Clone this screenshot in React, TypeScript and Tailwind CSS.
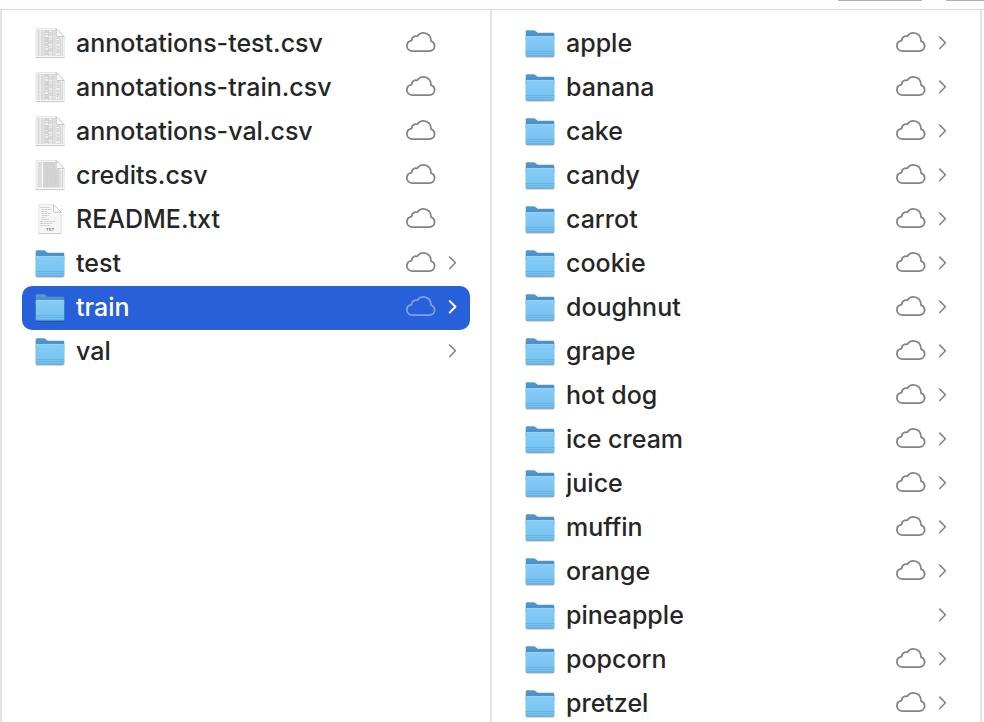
import { useId } from "react";

type Kind = "sheet" | "dense" | "text" | "folder";

interface Entry {
  name: string;
  kind: Kind;
  cloud?: boolean;
}

const files: Entry[] = [
  { name: "annotations-test.csv", kind: "sheet", cloud: true },
  { name: "annotations-train.csv", kind: "sheet", cloud: true },
  { name: "annotations-val.csv", kind: "sheet", cloud: true },
  { name: "credits.csv", kind: "dense", cloud: true },
  { name: "README.txt", kind: "text", cloud: true },
  { name: "test", kind: "folder", cloud: true },
  { name: "train", kind: "folder", cloud: true },
  { name: "val", kind: "folder" },
];

const classes: Entry[] = [
  "apple", "banana", "cake", "candy", "carrot", "cookie", "doughnut", "grape",
  "hot dog", "ice cream", "juice", "muffin", "orange", "pineapple", "popcorn", "pretzel",
].map((name) => ({ name, kind: "folder", cloud: name !== "pineapple" }));

function FolderIcon() {
  const id = useId();
  return (
    <svg viewBox="0 0 30 32" className="h-8 w-[30px] shrink-0" aria-hidden="true">
      <defs>
        <linearGradient id={id + "f"} x1="0" y1="0" x2="0" y2="1">
          <stop offset="0" stopColor="#86cdf7" />
          <stop offset="1" stopColor="#74bff0" />
        </linearGradient>
        <linearGradient id={id + "b"} x1="0" y1="0" x2="0" y2="1">
          <stop offset="0" stopColor="#559bce" />
          <stop offset="1" stopColor="#3b84bd" />
        </linearGradient>
      </defs>
      <rect x=".5" y="9" width="29" height="21" rx="1.8" fill="#000" opacity=".1" />
      <rect x=".8" y="9" width="28.4" height="20.2" rx="1.6" fill="#000" opacity=".24" />
      <path d="M.7 3.6Q.7 2.2 2.1 2.2H8.2C9.4 2.2 10 2.5 10.9 3.3L12 4.2Q12.7 4.8 14 4.8H27.9Q29.3 4.8 29.3 6.2V12H.7Z" fill={"url(#" + id + "b)"} />
      <path d="M.7 9.2Q.7 8 1.9 8H28.1Q29.3 8 29.3 9.2V27.2Q29.3 28.4 28.1 28.4H1.9Q.7 28.4 .7 27.2Z" fill={"url(#" + id + "f)"} />
      <path d="M1.8 8.4H28.2" stroke="#9ad7fa" strokeWidth=".7" />
      <path d="M.7 23.5H29.3M.7 25.5H29.3" stroke="#5caddf" strokeWidth=".6" />
      <path d="M1.4 28H28.6" stroke="#529fcf" strokeWidth=".7" />
    </svg>
  );
}

function SheetIcon({ dense }: { dense: boolean }) {
  return (
    <svg viewBox="0 0 30 32" className="h-8 w-[30px] shrink-0" aria-hidden="true">
      <path d="M1 .6H21.2L29.2 8.6V29.6H1Z" fill="#f7f7f7" stroke="#dedede" strokeWidth=".8" />
      <path d="M.8 29.6H29.3" stroke="#c6c6c6" strokeWidth=".9" />
      {dense ? (
        <>
          <path d="M2.5 2H7V27.5H2.5Z" fill="#e0e0e0" />
          <path d="M8 2H20.5V9H24V27.5H8Z" fill="#d3d3d3" />
          <path d="M25 10V27.5M27.3 10V27.5" stroke="#d2d2d2" strokeWidth="1.3" />
          <path d="M4.8 2V28M12 2V28M16 2V28M20 2V28" stroke="#c8c8c8" strokeWidth=".6" strokeDasharray="1 1" />
        </>
      ) : (
        <>
          <path d="M2.5 2H20.5V9H28V28H2.5Z" fill="#ececec" />
          <path d="M3.5 2V28M7 2V28M19.5 2V28" stroke="#d3d3d3" strokeWidth="2" strokeDasharray="1 .4" />
          <path d="M11.5 2V28" stroke="#d2d2d2" strokeWidth="3" strokeDasharray="3 1 1 2 5 1" />
          <path d="M15.6 2V28" stroke="#dadada" strokeWidth="3" strokeDasharray="1 1 4 2" />
          <path d="M23 9V28" stroke="#d6d6d6" strokeWidth="2.6" strokeDasharray="2 1 4 2" />
          <path d="M9.2 2V28M13.6 2V28M17.6 2V28M25.3 10V28M27.3 10V28" stroke="#c9c9c9" strokeWidth=".7" />
        </>
      )}
      <path d="M21.2.6V7.2Q21.2 8.6 22.6 8.6H29.2Z" fill="#fcfcfc" stroke="#c0c0c0" strokeWidth=".9" />
    </svg>
  );
}

function TextIcon() {
  return (
    <svg viewBox="0 0 30 32" className="h-8 w-[30px] shrink-0" aria-hidden="true">
      <path d="M3.8 .6H18.6L26.2 8.2V29.6H3.8Z" fill="#f6f6f6" stroke="#dedede" strokeWidth=".8" />
      <path d="M3.5 29.6H26.5" stroke="#c8c8c8" strokeWidth=".9" />
      <path d="M5.5 3.5H14M6.5 5.5H17M6.5 7.5H12M6.5 9.5H16M6.5 11.5H14M6.5 13.5H11M6.5 15.5H14M5.5 17.5H20M5.5 19.5H18M5.5 21.5H15" stroke="#c8c8c8" strokeWidth=".9" strokeDasharray="3 .6 2 .5" />
      <path d="M18.6.6V6.8Q18.6 8.2 20 8.2H26.2Z" fill="#fdfdfd" stroke="#c0c0c0" strokeWidth=".9" />
      <text x="15" y="27" textAnchor="middle" fontSize="4" fontWeight="700" fill="#7c7c7c" fontFamily="Inter, sans-serif">TXT</text>
    </svg>
  );
}

function EntryIcon({ kind }: { kind: Kind }) {
  if (kind === "folder") return <FolderIcon />;
  if (kind === "text") return <TextIcon />;
  return <SheetIcon dense={kind === "dense"} />;
}

function CloudIcon({ selected }: { selected: boolean }) {
  return (
    <svg viewBox="0 0 30 24" className={selected ? "h-6 w-[30px] shrink-0 text-[#7f9fea]" : "h-6 w-[30px] shrink-0 text-[#848484]"} fill="none" stroke="currentColor" strokeWidth="1.8" strokeLinejoin="round" aria-hidden="true">
      <path d="M6.6 19.1H23.2C26.5 19.1 28.6 16.9 28.6 14.1C28.6 11.8 27.3 10 25.1 9.2C25.3 4.2 21.8.9 17.4.9C14.6.9 12.6 2.1 11.3 4.4C8.4 3.6 5.7 5.4 5.6 8.7C2.7 9.3.9 11.2.9 13.8C.9 16.8 3.3 19.1 6.6 19.1Z" />
    </svg>
  );
}

function Chevron({ selected }: { selected: boolean }) {
  return (
    <svg viewBox="0 0 10 16" className={selected ? "h-4 w-2.5 text-white" : "h-4 w-2.5 text-[#848484]"} fill="none" stroke="currentColor" strokeWidth={selected ? 2 : 1.6} strokeLinecap="round" strokeLinejoin="round" aria-hidden="true">
      <path d="M1.8 1.1L7.4 6.8L1.8 12.5" />
    </svg>
  );
}

function Column({ label, entries, selected }: { label: string; entries: Entry[]; selected?: string }) {
  return (
    <ul aria-label={label} className="min-w-0 border-r-2 border-[#e4e4e4] px-5 pt-3">
      {entries.map((entry) => {
        const active = entry.name === selected;
        return (
          <li key={entry.name}>
            <button
              type="button"
              aria-current={active}
              className={
                active
                  ? "flex h-11 w-full items-center gap-[11px] rounded-[10px] bg-[#2860d9] pr-3 pl-[13px] text-left text-white"
                  : "flex h-11 w-full items-center gap-[11px] rounded-[10px] pr-3 pl-[13px] text-left text-[#262626]"
              }
            >
              <EntryIcon kind={entry.kind} />
              <span className="min-w-0 flex-1 truncate pb-0.5 text-[25px] leading-8 font-[450]">{entry.name}</span>
              {entry.cloud && <CloudIcon selected={active} />}
              <span className="flex w-[11px] shrink-0 pl-px">
                {entry.kind === "folder" && <Chevron selected={active} />}
              </span>
            </button>
          </li>
        );
      })}
    </ul>
  );
}

export default function App() {
  return (
    <div className="flex h-screen flex-col overflow-hidden bg-white font-['Inter',sans-serif]">
      <header className="flex h-2.5 shrink-0 justify-end gap-6 border-b border-[#dcdcdc] bg-[#fdfdfd]">
        <div className="h-px w-[84px] bg-[#b0b0b0]" />
        <div className="h-px w-[38px] bg-[#b0b0b0]" />
      </header>
      <main className="grid min-h-0 flex-1 grid-cols-2 border-l-2 border-[#e4e4e4] pr-0.5">
        <Column label="Dataset files" entries={files} selected="train" />
        <Column label="train" entries={classes} />
      </main>
    </div>
  );
}
